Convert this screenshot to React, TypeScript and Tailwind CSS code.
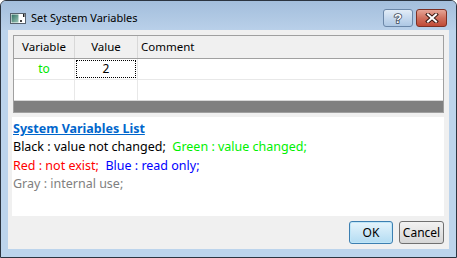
import React from "react";

const font = "font-['Noto_Sans','Liberation_Sans',sans-serif]";

function AppIcon() {
	return (
		<svg width="16" height="11" viewBox="0 0 16 11">
			<defs>
				<linearGradient id="ic" x1="0" y1="0" x2="1" y2="1">
					<stop offset="0" stopColor="#2f6f62" />
					<stop offset="1" stopColor="#9cc7b8" />
				</linearGradient>
			</defs>
			<rect x="0.5" y="0.5" width="15" height="10" fill="#fff" stroke="#55606c" />
			<rect x="1.5" y="1.5" width="7" height="8" fill="url(#ic)" />
			<rect x="13" y="1" width="1.5" height="3" fill="#222" />
			<rect x="10" y="7" width="2" height="2" fill="#444" />
		</svg>
	);
}

function CaptionButtons() {
	return (
		<div className="flex gap-[3px] pt-[8px]">
			<div className="w-[30px] h-[18px] rounded-[3px] border border-[#6b87a8] bg-gradient-to-b from-[#e3edf7] via-[#c6d9ee] to-[#aec8e4] flex items-center justify-center">
				<svg width="12" height="14" viewBox="0 0 12 14">
					<text
						x="6"
						y="12"
						textAnchor="middle"
						fontSize="13"
						fontWeight="bold"
						fontFamily="Liberation Sans, sans-serif"
						fill="#fff"
						stroke="#3d4a5a"
						strokeWidth="1.6"
						paintOrder="stroke"
					>
						?
					</text>
				</svg>
			</div>
			<div className="w-[31px] h-[18px] rounded-[3px] border border-[#7d3024] bg-gradient-to-b from-[#e6a597] via-[#d0705e] to-[#c04a36] flex items-center justify-center">
				<svg width="14" height="10" viewBox="0 0 14 10">
					<path d="M3 1.5 L11 8.5 M11 1.5 L3 8.5" stroke="#3a1a14" strokeWidth="4" strokeLinecap="square" />
					<path d="M3 1.5 L11 8.5 M11 1.5 L3 8.5" stroke="#fff" strokeWidth="2" strokeLinecap="square" />
				</svg>
			</div>
		</div>
	);
}

function Grid() {
	return (
		<div className="w-[431px] h-[78px] border border-[#a0a0a0] flex flex-col bg-[#808080]">
			<div className="h-[23px] flex bg-[#f0f0f0] border-b border-[#a0a0a0] text-[11.5px] text-black">
				<div className="w-[61px] border-r border-[#d8d8d8] flex items-center justify-center">Variable</div>
				<div className="w-[63px] border-r border-[#d8d8d8] flex items-center justify-center">Value</div>
				<div className="flex-1 flex items-center pl-[3px]">Comment</div>
			</div>
			<div className="h-[21px] flex bg-white border-b border-[#e8e8e8] text-[12px]">
				<div className="w-[61px] border-r border-[#e8e8e8] flex items-center justify-center text-[#00e800]">to</div>
				<div className="w-[63px] border-r border-[#e8e8e8] p-px">
					<div className="h-full border border-dotted border-black flex items-center justify-center text-black">2</div>
				</div>
				<div className="flex-1" />
			</div>
			<div className="h-[21px] flex bg-white border-b border-[#d8d8d8]">
				<div className="w-[61px] border-r border-[#e8e8e8]" />
				<div className="w-[63px] border-r border-[#e8e8e8]" />
				<div className="flex-1" />
			</div>
		</div>
	);
}

function Legend() {
	return (
		<div className="ml-[4px] mt-[4px] w-[432px] h-[99px] bg-white pt-[3px] pl-px text-[12.5px] leading-[18.3px]">
			<div className="font-bold text-[#0066cc] underline">System Variables List</div>
			<div>
				<span className="text-black">Black : value not changed;</span>
				<span className="text-[#00f000]">&nbsp; Green : value changed;</span>
			</div>
			<div>
				<span className="text-[#ff0000]">Red : not exist;</span>
				<span className="text-[#0000ff]">&nbsp; Blue : read only;</span>
			</div>
			<div className="text-[#808080]">Gray : internal use;</div>
		</div>
	);
}

export default function App() {
	return (
		<div className={`w-[457px] h-[258px] border border-[#2b3440] rounded-t-[6px] bg-[#bcd3ea] flex flex-col overflow-hidden ${font}`}>
			<div className="h-[29px] flex bg-gradient-to-b from-[#a3bedc] to-[#b9d0e9] pl-[9px] pr-[9px]">
				<div className="flex items-center gap-[5px] pt-[6px] flex-1">
					<AppIcon />
					<span className="text-[11px] text-black">Set System Variables</span>
				</div>
				<CaptionButtons />
			</div>
			<div className="flex flex-1">
				<div className="w-[7px] bg-[#bcd4ec]" />
				<div className="w-[441px] h-[219px] bg-[#f0f0f0] flex flex-col">
					<div className="pl-[5px] pt-[5px]">
						<Grid />
					</div>
					<Legend />
					<div className="flex justify-end gap-[6px] pr-[5px] mt-[5px] text-[12px]">
						<button className="w-[44px] h-[23px] rounded-[3px] border border-[#3c7fb1] bg-gradient-to-b from-[#e5f4fc] to-[#b3dcf2] shadow-[inset_0_0_0_1px_#bfe6f8] text-black">
							OK
						</button>
						<button className="w-[45px] h-[23px] rounded-[3px] border border-[#707070] bg-gradient-to-b from-[#f2f2f2] to-[#d6d6d6] text-black">
							Cancel
						</button>
					</div>
				</div>
				<div className="w-[7px] bg-[#bcd4ec]" />
			</div>
			<div className="h-[8px] bg-[#bcd4ec]" />
		</div>
	);
}
